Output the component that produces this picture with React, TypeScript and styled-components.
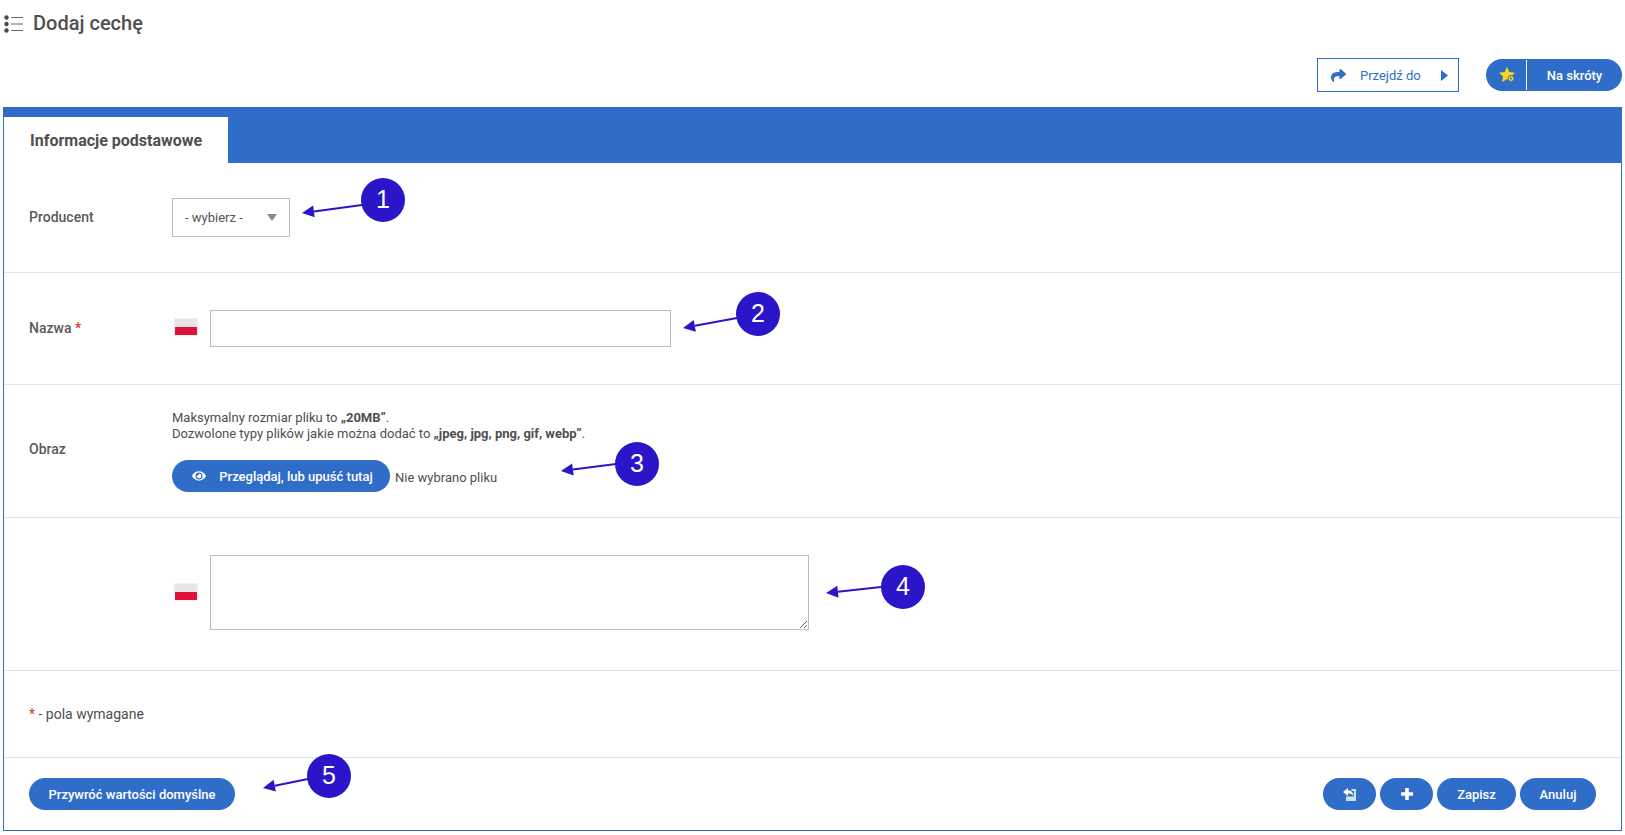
import React from "react";
import styled, { createGlobalStyle } from "styled-components";
import { FaShare, FaEye } from "react-icons/fa";

const Global = createGlobalStyle`
  html, body { margin: 0; padding: 0; background: #fff; }
  body { font-family: Roboto, "Liberation Sans", sans-serif; color: #4f4f4f; }
  * { box-sizing: border-box; }
`;

const BLUE = "#306dc8";

const Page = styled.div`
  position: relative;
  width: 1625px;
  height: 835px;
  overflow: hidden;
`;
const TitleBar = styled.div`
  height: 47px;
  display: flex;
  align-items: center;
  padding-left: 4px;
  gap: 10px;
`;
const PageTitle = styled.h1`
  margin: 0 0 2px;
  font-size: 20px;
  font-weight: 500;
  color: #4f4f4f;
`;
const Actions = styled.div`
  height: 60px;
  padding: 11px 3px 0 0;
  display: flex;
  justify-content: flex-end;
  align-items: flex-start;
  gap: 27px;
`;
const GoTo = styled.div`
  width: 142px;
  height: 34px;
  border: 1px solid ${BLUE};
  color: ${BLUE};
  display: flex;
  align-items: center;
  font-size: 13px;
  padding-left: 13px;
  svg { flex: none; }
  span { margin-left: 14px; width: 81px; }
`;
const Shortcuts = styled.div`
  width: 136px;
  height: 32px;
  margin-top: 1px;
  border-radius: 16px;
  background: ${BLUE};
  color: #fff;
  display: flex;
  align-items: center;
  font-size: 13px;
  font-weight: 500;
`;
const ShortcutIcon = styled.div`
  width: 41px;
  height: 30px;
  border-right: 1px solid #fff;
  display: flex;
  align-items: center;
  justify-content: center;
  padding-left: 3px;
`;
const ShortcutLabel = styled.div`
  flex: 1;
  text-align: center;
`;
const Panel = styled.section`
  margin: 0 3px;
  height: 724px;
  border: 1px solid ${BLUE};
  border-top: 0;
  display: flex;
  flex-direction: column;
`;
const TabBar = styled.div`
  height: 56px;
  padding-top: 10px;
  background: ${BLUE};
  margin: 0 -1px;
  padding-left: 1px;
  flex: none;
`;
const Tab = styled.div`
  width: 224px;
  height: 46px;
  background: #fff;
  font-size: 16px;
  font-weight: 700;
  color: #4f4f4f;
  display: flex;
  align-items: center;
  padding-left: 26px;
`;
const Row = styled.div<{ $h: number }>`
  height: ${(p) => p.$h}px;
  flex: none;
  display: flex;
  align-items: center;
  padding-left: 25px;
  border-bottom: 1px solid #e3e3e3;
`;
const Label = styled.div`
  width: 143px;
  flex: none;
  padding-bottom: 2px;
  font-size: 14px;
  font-weight: 500;
  color: #5a5a5a;
`;
const RaisedLabel = styled(Label)`
  margin-top: -2px;
`;
const Req = styled.span`
  color: #d9382c;
`;
const Select = styled.div`
  width: 118px;
  height: 39px;
  border: 1px solid #bdbdbd;
  display: flex;
  align-items: center;
  justify-content: space-between;
  padding: 0 12px;
  font-size: 13px;
  color: #555;
`;
const Caret = styled.i`
  display: block;
  width: 0;
  height: 0;
  border-left: 5.5px solid transparent;
  border-right: 5.5px solid transparent;
  border-top: 7px solid #8a8a8a;
`;
const Flag = styled.div`
  width: 24px;
  height: 18px;
  margin: 0 12px 4px 2px;
  border: 1px solid #f0f0f0;
  background: linear-gradient(#e6e6e6 50%, #dc143c 50%);
  flex: none;
`;
const TextInput = styled.input`
  width: 461px;
  height: 37px;
  border: 1px solid #bdbdbd;
  outline: none;
  margin: 0;
  background: #fff;
`;
const TextBox = styled.textarea`
  display: block;
  width: 599px;
  height: 75px;
  border: 1px solid #bdbdbd;
  outline: none;
  margin: 0 0 3px;
  background: #fff;
`;
const Note = styled.p`
  margin: 0 0 18px;
  font-size: 13px;
  line-height: 16px;
  color: #4f4f4f;
`;
const FileLine = styled.div`
  display: flex;
  align-items: center;
  gap: 5px;
  font-size: 13px;
  color: #4f4f4f;
`;
const FileName = styled.span`
  padding-top: 2px;
`;
const Pill = styled.button<{ $w: number; $pad?: number }>`
  width: ${(p) => p.$w}px;
  height: 32px;
  border: 0;
  padding: 0 0 0 ${(p) => p.$pad ?? 0}px;
  border-radius: 16px;
  background: ${BLUE};
  color: #fff;
  font-family: inherit;
  font-size: 13px;
  font-weight: 500;
  display: flex;
  align-items: center;
  justify-content: center;
  gap: 13px;
`;
const RequiredNote = styled.div`
  font-size: 14px;
  color: #4f4f4f;
`;
const Footer = styled.div`
  flex: 1;
  display: flex;
  align-items: flex-start;
  justify-content: space-between;
  padding: 20px 25px 0 25px;
`;
const FooterRight = styled.div`
  display: flex;
  gap: 4px;
`;
const Marker = styled.div<{ $x: number; $y: number }>`
  position: absolute;
  left: ${(p) => p.$x - 22}px;
  top: ${(p) => p.$y - 22}px;
  width: 44px;
  height: 44px;
  padding-bottom: 2px;
  border-radius: 50%;
  background: #2a15c8;
  color: #fff;
  font-family: "Liberation Sans", sans-serif;
  font-size: 25px;
  display: flex;
  align-items: center;
  justify-content: center;
`;
const ArrowLayer = styled.svg`
  position: absolute;
  left: 0;
  top: 0;
  pointer-events: none;
`;

const ListIcon = () => (
  <svg width="19" height="18" viewBox="0 0 19 18">
    <g fill="#4a4a4a">
      <circle cx="2.5" cy="2.5" r="2.2" />
      <circle cx="2.5" cy="9" r="2.2" />
      <circle cx="2.5" cy="15.5" r="2.2" />
    </g>
    <g stroke="#6a6a6a" strokeWidth="1">
      <path d="M7 2.5h12M7 9h12M7 15.5h12" />
    </g>
  </svg>
);
const CaretRight = () => (
  <svg width="7" height="11" viewBox="0 0 7 11">
    <path d="M0 0l7 5.500L0 11z" fill={BLUE} />
  </svg>
);
const StarBadge = () => (
  <svg width="17" height="16" viewBox="0 0 17 16">
    <path d="M8 0l2.400 5 5.600.7-4.100 3.800 1.100 5.500L8 12.300 3 15l1.100-5.500L0 5.700 5.600 5z" fill="#fbd51f" />
    <circle cx="12" cy="11.500" r="3" fill="#fbd51f" stroke={BLUE} strokeWidth="1" />
    <circle cx="12" cy="11.500" r="1" fill={BLUE} />
  </svg>
);
const BackIcon = () => (
  <svg width="14" height="13" viewBox="0 0 14 13">
    <path d="M3 8.500h8V3H8.500V1H13v12H3z" fill="#d3def3" />
    <path d="M0 4L5 0v2.500c3 0 5.500 2 5.500 5.500C9 6 7.500 5.500 5 5.500V8z" fill="#fff" />
  </svg>
);
const PlusIcon = () => (
  <svg width="14" height="14" viewBox="0 0 14 14">
    <path d="M5.200 1h3.600v4.200H13v3.600H8.800V13H5.200V8.800H1V5.200h4.200z" fill="#fff" />
  </svg>
);

const arrows: [number, number, number, number][] = [
  [362, 205, 302, 213],
  [737, 318, 683, 328],
  [616, 464, 561, 471],
  [881, 587, 826, 593],
  [308, 779, 263, 788],
];

const Arrow = ({ from, tip }: { from: [number, number]; tip: [number, number] }) => {
  const dx = tip[0] - from[0];
  const dy = tip[1] - from[1];
  const len = Math.hypot(dx, dy);
  const ux = dx / len;
  const uy = dy / len;
  const bx = tip[0] - ux * 12;
  const by = tip[1] - uy * 12;
  const pts = `${tip[0]},${tip[1]} ${bx - uy * 6},${by + ux * 6} ${bx + uy * 6},${by - ux * 6}`;
  return (
    <g>
      <line x1={from[0]} y1={from[1]} x2={bx} y2={by} stroke="#2a15c8" strokeWidth="2" />
      <polygon points={pts} fill="#2a15c8" />
    </g>
  );
};

const markers = [
  { n: 1, x: 383, y: 200 },
  { n: 2, x: 758, y: 314 },
  { n: 3, x: 637, y: 464 },
  { n: 4, x: 903, y: 587 },
  { n: 5, x: 329, y: 776 },
];

export default function App() {
  return (
    <Page>
      <Global />
      <TitleBar>
        <ListIcon />
        <PageTitle>Dodaj cechę</PageTitle>
      </TitleBar>
      <Actions>
        <GoTo>
          <FaShare size={15} />
          <span>Przejdź do</span>
          <CaretRight />
        </GoTo>
        <Shortcuts>
          <ShortcutIcon>
            <StarBadge />
          </ShortcutIcon>
          <ShortcutLabel>Na skróty</ShortcutLabel>
        </Shortcuts>
      </Actions>
      <Panel>
        <TabBar>
          <Tab>Informacje podstawowe</Tab>
        </TabBar>
        <Row $h={110}>
          <Label>Producent</Label>
          <Select>
            - wybierz -
            <Caret />
          </Select>
        </Row>
        <Row $h={112}>
          <Label>
            Nazwa <Req>*</Req>
          </Label>
          <Flag />
          <TextInput />
        </Row>
        <Row $h={133}>
          <RaisedLabel>Obraz</RaisedLabel>
          <div>
            <Note>
              Maksymalny rozmiar pliku to <b>„20MB”</b>.
              <br />
              Dozwolone typy plików jakie można dodać to <b>„jpeg, jpg, png, gif, webp”</b>.
            </Note>
            <FileLine>
              <Pill $w={218} $pad={3}>
                <FaEye size={14} />
                Przeglądaj, lub upuść tutaj
              </Pill>
              <FileName>Nie wybrano pliku</FileName>
            </FileLine>
          </div>
        </Row>
        <Row $h={153}>
          <Label />
          <Flag />
          <TextBox />
        </Row>
        <Row $h={87}>
          <RequiredNote>
            <Req>*</Req> - pola wymagane
          </RequiredNote>
        </Row>
        <Footer>
          <Pill $w={206}>Przywróć wartości domyślne</Pill>
          <FooterRight>
            <Pill $w={53}>
              <BackIcon />
            </Pill>
            <Pill $w={53}>
              <PlusIcon />
            </Pill>
            <Pill $w={79}>Zapisz</Pill>
            <Pill $w={76}>Anuluj</Pill>
          </FooterRight>
        </Footer>
      </Panel>
      <ArrowLayer width="1625" height="835">
        {arrows.map((a, i) => (
          <Arrow key={i} from={[a[0], a[1]]} tip={[a[2], a[3]]} />
        ))}
      </ArrowLayer>
      {markers.map((m) => (
        <Marker key={m.n} $x={m.x} $y={m.y}>
          {m.n}
        </Marker>
      ))}
    </Page>
  );
}
